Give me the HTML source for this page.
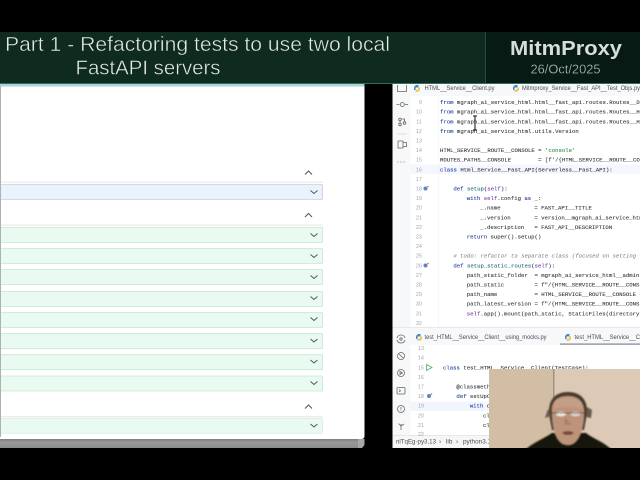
<!DOCTYPE html>
<html><head><meta charset="utf-8"><style>
html,body{margin:0;padding:0;background:#000;width:640px;height:480px;overflow:hidden}
svg{display:block}
.c text{font-family:"Liberation Mono",monospace;font-size:5.65px;fill:#33373b;stroke:#33373b;stroke-width:.1;white-space:pre}
.c .k{fill:#1d3c9c;stroke:#1d3c9c}.c .s{fill:#2f8a4a;stroke:#2f8a4a}.c .m{fill:#7a3fa0;stroke:#7a3fa0}.c .f{fill:#1c6f78;stroke:#1c6f78}.c .g{fill:#777;stroke:none;font-style:italic}
.n text{font-family:"Liberation Sans",sans-serif;font-size:5.5px;fill:#a4a8ad}
.t text{font-family:"Liberation Sans",sans-serif;font-size:6.4px;fill:#4a4e54}
.h{font-family:"Liberation Sans",sans-serif;fill:#e3ece8}
</style></head><body>
<svg width="640" height="480" viewBox="0 0 640 480" xmlns="http://www.w3.org/2000/svg">
<defs>
<filter id="b" x="-5%" y="-5%" width="110%" height="110%"><feGaussianBlur stdDeviation="0.35"/></filter>
<filter id="v" x="-20%" y="-20%" width="140%" height="140%"><feGaussianBlur stdDeviation="0.9"/></filter>
<linearGradient id="band" x1="0" y1="0" x2="0" y2="1"><stop offset="0" stop-color="#6e6e6e"/><stop offset=".5" stop-color="#9a9a9a"/><stop offset="1" stop-color="#8a8a8a"/></linearGradient>
<clipPath id="cam"><rect x="489" y="369" width="151" height="79"/></clipPath>
<clipPath id="up"><rect x="410" y="96" width="230" height="231"/></clipPath>
<clipPath id="low"><rect x="410" y="345" width="230" height="90"/></clipPath>
</defs>
<rect width="640" height="480" fill="#000"/>

<!-- left browser window -->
<rect x="0" y="437" width="360" height="11" fill="url(#band)"/>
<path d="M358 439H364.500V445L362 448H358Z" fill="#a8a8a8"/>
<path d="M0 84H364.500V436Q364.500 439 361 439H0Z" fill="#fff"/>
<rect x="0" y="84" width="364.500" height="2.500" fill="#a9d3d8"/>
<g fill="none" stroke="#555" stroke-width="1">
<path d="M305 174.500L308.500 171L312 174.500"/>
<path d="M305 217L308.500 213.500L312 217"/>
<path d="M305 408.500L308.500 405L312 408.500"/>
</g>
<rect x="0" y="181.500" width="323" height="1.500" fill="#f0efea"/>
<rect x="0" y="224.500" width="323" height="1.500" fill="#f0efea"/>
<rect x="0" y="416" width="323" height="1.500" fill="#ececec"/>
<rect x="-3" y="184.500" width="325.500" height="15" rx="1" fill="#eaf3fd" stroke="#c6cfdc" stroke-width="0.800"/>
<g fill="#e9fbf0" stroke="#c3e6d3" stroke-width="0.800">
<rect x="-3" y="227.500" width="325.500" height="15" rx="1"/>
<rect x="-3" y="248.500" width="325.500" height="15" rx="1"/>
<rect x="-3" y="269.500" width="325.500" height="15" rx="1"/>
<rect x="-3" y="291.500" width="325.500" height="15" rx="1"/>
<rect x="-3" y="312.500" width="325.500" height="15" rx="1"/>
<rect x="-3" y="333.700" width="325.500" height="15" rx="1"/>
<rect x="-3" y="354.700" width="325.500" height="15" rx="1"/>
<rect x="-3" y="376" width="325.500" height="15" rx="1"/>
<rect x="-3" y="418.500" width="325.500" height="15" rx="1" stroke="#dcebe2"/>
</g>
<g fill="none" stroke="#555" stroke-width="1">
<path d="M310.500 190.500L314 193.500L317.500 190.500"/>
<path d="M310.500 233.500L314 236.500L317.500 233.500"/>
<path d="M310.500 254.500L314 257.500L317.500 254.500"/>
<path d="M310.500 275.500L314 278.500L317.500 275.500"/>
<path d="M310.500 296.500L314 299.500L317.500 296.500"/>
<path d="M310.500 317.500L314 320.500L317.500 317.500"/>
<path d="M310.500 339L314 342L317.500 339"/>
<path d="M310.500 360L314 363L317.500 360"/>
<path d="M310.500 381.500L314 384.500L317.500 381.500"/>
<path d="M310.500 424L314 427L317.500 424"/>
</g>
<rect x="0" y="86" width="1" height="351" fill="#b0b0b0"/>

<!-- IDE -->
<g filter="url(#b)">
<rect x="392.500" y="84" width="248" height="364" fill="#fff"/>
<rect x="392.500" y="84" width="18" height="351" fill="#f7f8fa"/>
<rect x="410" y="84" width="230" height="12" fill="#f7f8fa"/>
<rect x="410" y="164.500" width="230" height="9.500" fill="#f4f7fd"/>
<rect x="410" y="401.500" width="230" height="9.500" fill="#f1f5fc"/>
<rect x="438.500" y="96" width="0.600" height="231" fill="#eceef1"/>
<rect x="392.500" y="327" width="248" height="7" fill="#f7f8fa"/>
<rect x="410" y="334" width="230" height="11" fill="#f7f8fa"/>
<rect x="392.500" y="327" width="248" height="0.800" fill="#e2e4e8"/>
<rect x="560" y="343.500" width="80" height="1.200" fill="#7c8597"/>
<rect x="392.500" y="435" width="248" height="13" fill="#f6f6f7"/>
<rect x="392.500" y="435" width="248" height="0.600" fill="#dcdee2"/>

<!-- sidebar icons -->
<g fill="none" stroke="#666" stroke-width="0.800">
<path d="M397.500 85V91.500H406.500V85"/>
<path d="M396.500 104.500H399.500M405 104.500H408"/><circle cx="402.300" cy="104.500" r="2"/>
<circle cx="400" cy="119.500" r="1.300"/><circle cx="404.500" cy="123" r="1.300"/><circle cx="400" cy="124.500" r="1.300"/><path d="M400 121V123M404.500 121.500V119H402"/>
<path d="M397.500 134H407" stroke="#d5d6d9"/>
<path d="M398 141H403V148H398ZM403 142.500H406.500V146.500H403Z"/>
<path d="M397 338C398 334 404 334 405 338M405 340C404 344 398 344 397 340"/><circle cx="401" cy="339" r="1.200"/>
<circle cx="401" cy="356" r="3.500"/><path d="M399 354L403 358"/>
<circle cx="401" cy="373" r="3.500"/><path d="M400 371.500V374.500L402.500 373Z"/>
<rect x="397" y="387.500" width="8" height="6.500" rx="1"/><path d="M399 389.500L400.500 390.700L399 392"/>
<circle cx="401" cy="409" r="3.500"/><path d="M401 407V409.500M401 410.500V411.200"/>
<path d="M401 424V430M398.500 423.500L401 426L404 424"/>
</g>
<g fill="#666"><circle cx="398" cy="162" r="0.500"/><circle cx="401" cy="162" r="0.500"/><circle cx="404" cy="162" r="0.500"/></g>

<!-- python tab icons -->
<g>
<path d="M416 85h2.500v2.500h-3v2.500h-1.500v-3z" fill="#4a86c5"/><path d="M418.500 87.500h1.500v2.500l-2 1.800h-2.500v-2h2.500z" fill="#f0c43c"/>
<path d="M515 85h2.500v2.500h-3v2.500h-1.500v-3z" fill="#4a86c5"/><path d="M517.500 87.500h1.500v2.500l-2 1.800h-2.500v-2h2.500z" fill="#f0c43c"/>
<path d="M418 334h2.500v2.500h-3v2.500h-1.500v-3z" fill="#4a86c5"/><path d="M420.500 336.500h1.500v2.500l-2 1.800h-2.500v-2h2.500z" fill="#f0c43c"/>
<path d="M567 334h2.500v2.500h-3v2.500h-1.500v-3z" fill="#4a86c5"/><path d="M569.500 336.500h1.500v2.500l-2 1.800h-2.500v-2h2.500z" fill="#f0c43c"/>
</g>
<g class="t">
<text x="424.500" y="90" textLength="70" lengthAdjust="spacingAndGlyphs">HTML__Service__Client.py</text>
<text x="522" y="90" textLength="118" lengthAdjust="spacingAndGlyphs">Mitmproxy_Service__Fast_API__Test_Objs.py</text>
<text x="424.500" y="339" textLength="122" lengthAdjust="spacingAndGlyphs">test_HTML__Service__Client__using_mocks.py</text>
<text x="574.500" y="339" textLength="84" lengthAdjust="spacingAndGlyphs">test_HTML__Service__Client.py</text>
<text x="396" y="443.500" textLength="40" lengthAdjust="spacingAndGlyphs">nlTqEg-py3.13</text>
<text x="439" y="443.500" fill="#888">&#8250;</text>
<text x="446" y="443.500">lib</text>
<text x="456" y="443.500" fill="#888">&#8250;</text>
<text x="463" y="443.500">python3.13</text>
</g>

<!-- line numbers upper -->
<g class="n" text-anchor="end">
<text x="422" y="104">9</text><text x="422" y="113.700">10</text><text x="422" y="123.300">11</text><text x="422" y="132.900">12</text>
<text x="422" y="142.500">13</text><text x="422" y="152.100">14</text><text x="422" y="161.700">15</text><text x="422" y="171.300">16</text>
<text x="422" y="180.900">17</text><text x="422" y="190.500">18</text><text x="422" y="200.100">19</text><text x="422" y="209.700">20</text>
<text x="422" y="219.300">21</text><text x="422" y="228.900">22</text><text x="422" y="238.500">23</text><text x="422" y="248.100">24</text>
<text x="422" y="257.700">25</text><text x="422" y="267.300">26</text><text x="422" y="276.900">27</text><text x="422" y="286.500">28</text>
<text x="422" y="296.100">29</text><text x="422" y="305.700">30</text><text x="422" y="315.300">31</text><text x="422" y="324.900">32</text>
</g>
<circle cx="425.500" cy="188.500" r="2" fill="#5c83c9"/><circle cx="425.500" cy="265.500" r="2" fill="#5c83c9"/>
<circle cx="428" cy="186.500" r="0.800" fill="#d65a5a"/><circle cx="428" cy="263.500" r="0.800" fill="#d65a5a"/>

<!-- code upper -->
<g class="c" clip-path="url(#up)">
<text x="440" y="104"><tspan class="k">from</tspan> mgraph_ai_service_html.html__fast_api.routes.Routes__Docs</text>
<text x="440" y="113.700"><tspan class="k">from</tspan> mgraph_ai_service_html.html__fast_api.routes.Routes__Html</text>
<text x="440" y="123.300"><tspan class="k">from</tspan> mgraph_ai_service_html.html__fast_api.routes.Routes__Html</text>
<text x="440" y="132.900"><tspan class="k">from</tspan> mgraph_ai_service_html.utils.Version</text>
<text x="440" y="152.100">HTML_SERVICE__ROUTE__CONSOLE = <tspan class="s">'console'</tspan></text>
<text x="440" y="161.700">ROUTES_PATHS__CONSOLE        = [f'/{HTML_SERVICE__ROUTE__CONSOLE}</text>
<text x="440" y="171.300"><tspan class="k">class</tspan> Html_Service__Fast_API(Serverless__Fast_API):</text>
<text x="453.400" y="190.500"><tspan class="k">def</tspan> <tspan class="f">setup</tspan>(<tspan class="m">self</tspan>):</text>
<text x="466.800" y="200.100"><tspan class="k">with</tspan> <tspan class="m">self</tspan>.config <tspan class="k">as</tspan> _:</text>
<text x="480.200" y="209.700">_.name          = FAST_API__TITLE</text>
<text x="480.200" y="219.300">_.version       = version__mgraph_ai_service_html</text>
<text x="480.200" y="228.900">_.description   = FAST_API__DESCRIPTION</text>
<text x="466.800" y="238.500"><tspan class="k">return</tspan> super().setup()</text>
<text x="453.400" y="257.700" class="g"># todo: refactor to separate class (focused on setting</text>
<text x="453.400" y="267.300"><tspan class="k">def</tspan> <tspan class="f">setup_static_routes</tspan>(<tspan class="m">self</tspan>):</text>
<text x="466.800" y="276.900">path_static_folder  = mgraph_ai_service_html__admin</text>
<text x="466.800" y="286.500">path_static         = f"/{HTML_SERVICE__ROUTE__CONS</text>
<text x="466.800" y="296.100">path_name           = HTML_SERVICE__ROUTE__CONSOLE</text>
<text x="466.800" y="305.700">path_latest_version = f"/{HTML_SERVICE__ROUTE__CONS</text>
<text x="466.800" y="315.300"><tspan class="m">self</tspan>.app().mount(path_static, StaticFiles(directory</text>
</g>

<!-- I-beam cursor -->
<path d="M473 116h4M475 116V130M473 130h4" stroke="#111" stroke-width="1" fill="none"/>

<!-- line numbers lower -->
<g class="n" text-anchor="end">
<text x="424" y="350">13</text><text x="424" y="359.700">14</text><text x="424" y="369.300">15</text><text x="424" y="378.900">16</text>
<text x="424" y="388.500">17</text><text x="424" y="398">18</text><text x="424" y="407.700">19</text><text x="424" y="417.300">20</text>
<text x="424" y="426.900">21</text><text x="424" y="436">22</text>
</g>
<path d="M426.500 364.500L432 367.500L426.500 370.500Z" fill="none" stroke="#4faa5f" stroke-width="0.800"/>
<circle cx="429" cy="396" r="2" fill="#5c83c9"/><circle cx="431.500" cy="394" r="0.800" fill="#d65a5a"/>
<g class="c" clip-path="url(#low)">
<text x="443" y="369.300"><tspan class="k">class</tspan> test_HTML__Service__Client(TestCase):</text>
<text x="456.400" y="388.500">@classmethod</text>
<text x="456.400" y="398"><tspan class="k">def</tspan> setUpClass(cls):</text>
<text x="469.800" y="407.700"><tspan class="k">with</tspan> cls</text>
<text x="483" y="417.300">cl</text><text x="483" y="426.900">cl</text>
</g>
</g>

<!-- webcam -->
<g clip-path="url(#cam)">
<rect x="489" y="369" width="65" height="79" fill="#d2bda5"/>
<rect x="554" y="369" width="86" height="79" fill="#dcc9b6"/>
<rect x="553.500" y="369" width="0.800" height="30" fill="#75685a"/>
<g filter="url(#v)">
<path d="M525 450C532 443 545 438 552 433L586 433C592 438 604 442 612 450Z" fill="#17130f"/>
<path d="M549 414C548 398 557 392 568 392C580 392 588 399 587 414L584 430L552 430Z" fill="#4a3a2f"/>
<path d="M548 409L545 418L551 416ZM587 407L592 410L591 418L586 417Z" fill="#6a5a4c"/>
<path d="M552 412C551 402 557 396 568 396C579 396 585 403 584 414C584 428 579 445 568 445C556 445 552 428 552 412Z" fill="#bd947a"/>
<path d="M555 401C562 396 575 396 582 403L582 409C572 406 563 406 554 409Z" fill="#c49f87"/>
<ellipse cx="561" cy="414" rx="5" ry="2.300" fill="#f0ece7"/>
<ellipse cx="575.500" cy="414" rx="5" ry="2.300" fill="#ded6cf"/>
<path d="M551 413H585" stroke="#40362e" stroke-width="0.700"/>
<path d="M565 417L564 425H572Z" fill="#ab8069"/>
<ellipse cx="568" cy="433" rx="5.500" ry="2" fill="#74493a"/>
</g>
</g>

<!-- header -->
<rect x="0" y="32" width="640" height="51.500" fill="#0f2a1f"/>
<rect x="486" y="32" width="154" height="51.500" fill="#071a14"/>
<rect x="485" y="32" width="1" height="51.500" fill="#2c4a3e"/>
<rect x="0" y="83" width="640" height="1" fill="#2f6f5c"/>
<g class="h">
<g stroke="#0f2a1f" stroke-width="0.450">
<text x="5" y="51" font-size="20.500" textLength="385" lengthAdjust="spacingAndGlyphs">Part 1 - Refactoring tests to use two local</text>
<text x="75.500" y="74.500" font-size="20.500" textLength="145" lengthAdjust="spacingAndGlyphs">FastAPI servers</text>
</g>
<text x="510" y="55" font-size="20.500" font-weight="bold" textLength="112" lengthAdjust="spacingAndGlyphs" fill="#d6dedb">MitmProxy</text>
<text x="530.500" y="73.500" font-size="13" textLength="70" lengthAdjust="spacingAndGlyphs" fill="#b9c4bf" stroke="#071a14" stroke-width=".25">26/Oct/2025</text>
</g>
</svg>
</body></html>
